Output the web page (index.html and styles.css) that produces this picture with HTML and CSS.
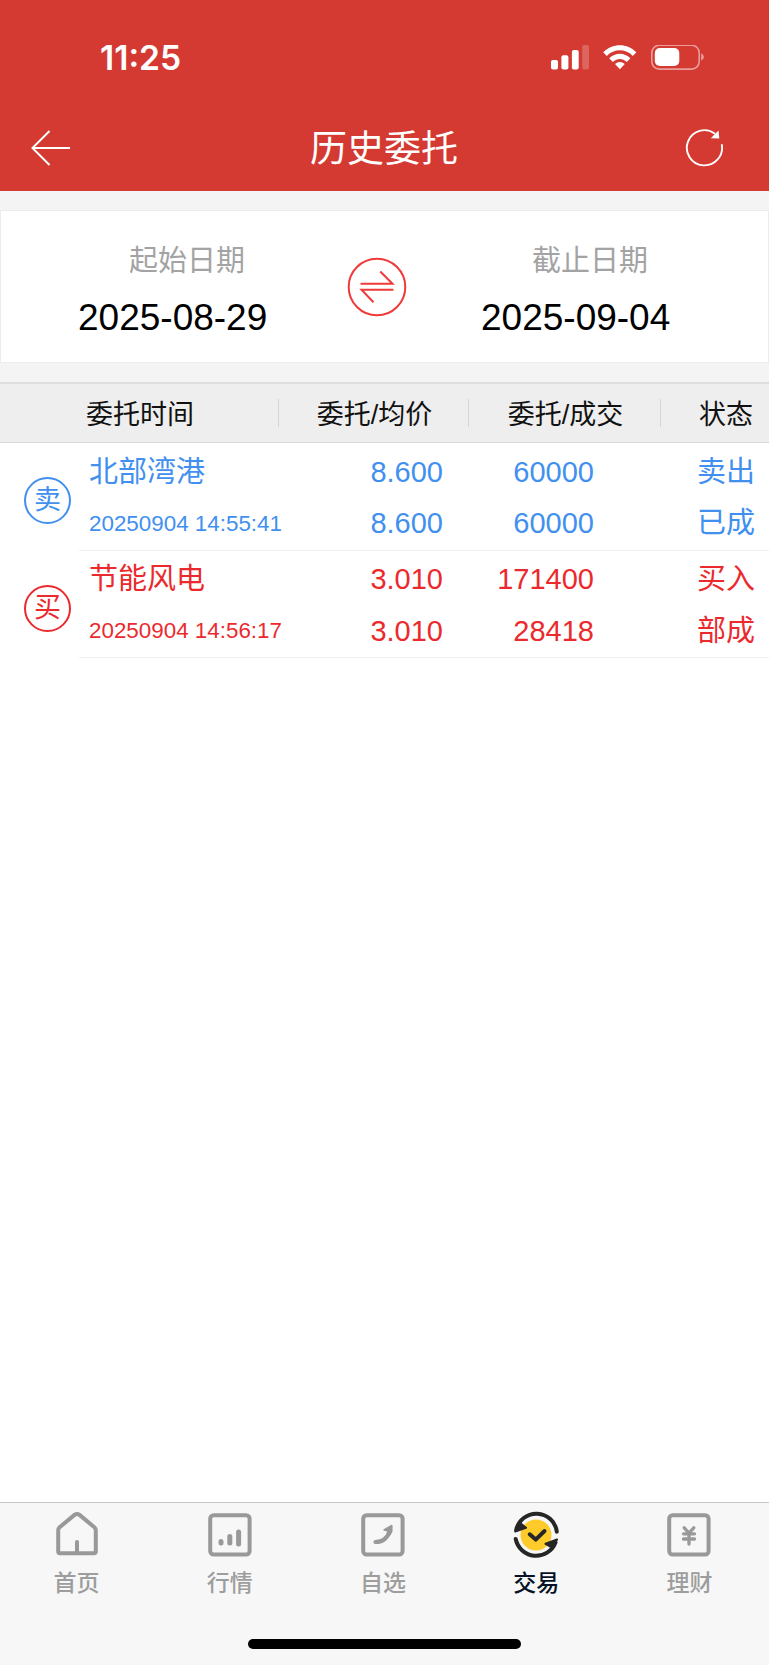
FILE: index.html
```html
<!DOCTYPE html>
<html lang="zh-CN">
<head>
<meta charset="utf-8">
<title>历史委托</title>
<link rel="stylesheet" href="styles.css">
</head>
<body>
<div class="app">
  <header class="top">
    <div class="status">
      <span class="clock">11:25</span>
      <svg class="status-icons" width="154" height="26" viewBox="0 0 154 26" fill="#fff">
        <rect x="0" y="15" width="7" height="9.5" rx="2"/>
        <rect x="10.4" y="10.3" width="7" height="14.2" rx="2"/>
        <rect x="20.9" y="5" width="6.8" height="19.5" rx="2"/>
        <rect x="31.2" y="0" width="6.8" height="24.5" rx="2" opacity=".22"/>
        <path d="M52.2 7.2C61.5-2.2 76.3-2.2 85.400 7.200L81.800 10.900C74.500 3.500 63.200 3.500 55.800 10.900ZM58.200 13.300C64.300 7.200 73.400 7.200 79.400 13.300L75.800 17C71.600 12.900 66 12.900 61.900 17ZM64 19C66.900 16.300 70.900 16.300 73.800 19L68.900 24.200Z"/>
        <rect x="100.800" y=".3" width="47.400" height="23.800" rx="7.500" fill="none" stroke="#fff" stroke-width="1.600" opacity=".5"/>
        <rect x="103.800" y="3" width="24.500" height="18" rx="5"/>
        <path d="M150.200 8.500C153.700 9.800 153.700 14 150.200 15.400Z" opacity=".5"/>
      </svg>
    </div>
    <div class="nav">
      <svg width="40" height="38" viewBox="0 0 40 38" fill="none" stroke="#fff" stroke-width="2"><path d="M18.500 2L1.500 19L18.500 36M1.500 19H39"/></svg>
      <h1 class="title">历史委托</h1>
      <svg width="40" height="40" viewBox="0 0 40 40" fill="none" stroke="#fff" stroke-width="1.900"><path d="M37.700 16.300A17.600 17.600 0 1 1 31 5.700"/><path d="M34.500 2.500L35.300 10.500L26.800 10.200Z" fill="#fff" stroke="none"/></svg>
    </div>
  </header>
  <section class="range">
    <div class="date">
      <span class="date-label">起始日期</span>
      <span class="date-value">2025-08-29</span>
    </div>
    <svg class="swap" width="60" height="60" viewBox="0 0 60 60" fill="none" stroke="#f03a3a" stroke-width="2"><circle cx="30" cy="30" r="28.300"/><path d="M13.500 26.700H45.500L33.300 14.500M46.500 32.700H14.500L26.500 45.300"/></svg>
    <div class="date">
      <span class="date-label">截止日期</span>
      <span class="date-value">2025-09-04</span>
    </div>
  </section>
  <div class="thead">
    <span class="th">委托时间</span><span class="th">委托/均价</span><span class="th">委托/成交</span><span class="th">状态</span>
  </div>
  <main class="orders">
    <article class="order sell">
      <span class="badge">卖</span>
      <div class="cells">
        <span class="name">北部湾港</span><span class="num">8.600</span><span class="num">60000</span><span class="state">卖出</span>
        <span class="time">20250904 14:55:41</span><span class="num">8.600</span><span class="num">60000</span><span class="state">已成</span>
      </div>
    </article>
    <article class="order buy">
      <span class="badge">买</span>
      <div class="cells">
        <span class="name">节能风电</span><span class="num">3.010</span><span class="num">171400</span><span class="state">买入</span>
        <span class="time">20250904 14:56:17</span><span class="num">3.010</span><span class="num">28418</span><span class="state">部成</span>
      </div>
    </article>
  </main>
  <footer class="bottom">
    <nav class="tabs">
      <a class="tab"><svg class="tab-icon" viewBox="0 0 48 48"><path d="M5.200 40.500V19.500Q5.200 17.500 6.600 16.300L21.500 3.900Q24 2 26.500 3.900L41.400 16.300Q42.800 17.500 42.800 19.500V40.500Q42.800 42.200 41 42.200H7Q5.200 42.200 5.200 40.500ZM24 41V31" /></svg><span>首页</span></a>
      <a class="tab"><svg class="tab-icon" viewBox="0 0 48 48"><rect x="4.200" y="4.200" width="39.400" height="39.400" rx="3.500"/><path d="M15 30.500V32M23.800 25.500V32M32.600 21V33" stroke-width="5"/></svg><span>行情</span></a>
      <a class="tab"><svg class="tab-icon" viewBox="0 0 48 48"><rect x="4.200" y="4.200" width="39.400" height="39.400" rx="3.500"/><path d="M16.400 31Q27 31 30.500 20.500"/><path d="M25 19L32.800 14.500V20.500L30.500 24.500L28.500 19.800Z" fill="#999" stroke-width="1.500"/></svg><span>自选</span></a>
      <a class="tab active"><svg class="tab-icon" viewBox="0 0 48 48"><circle cx="24" cy="24" r="15.500" fill="#ffcb2b" stroke="none"/><path d="M4.200 19A20.600 20.600 0 0 1 44.800 20.700M3.700 28A20.800 20.800 0 0 0 43.500 31.500"/><path d="M7 11L14 16.800L3.200 20.500ZM45 28.500L33.500 32.800L40.500 37Z" fill="#262626" stroke-width="2"/><path d="M17.700 23.300L23.700 28.600L32.500 20"/></svg><span>交易</span></a>
      <a class="tab"><svg class="tab-icon" viewBox="0 0 48 48"><rect x="4.200" y="4.200" width="39.400" height="39.400" rx="3.500"/><path d="M19.200 16.800L24 22L28.800 16.800M18.500 22.800H29.500M18.500 28H29.500M24 23V33" stroke-width="3.300"/></svg><span>理财</span></a>
    </nav>
    <div class="home-bar"></div>
  </footer>
</div>
</body>
</html>
```
FILE: styles.css
```css
* { box-sizing: border-box; }
body { margin: 0; font-family: "Liberation Sans", "Noto Sans CJK SC", sans-serif; background: #fff; }
.app { width: 769px; height: 1665px; display: flex; flex-direction: column; background: #f4f4f4; overflow: hidden; }
.top { height: 191px; background: #d43a32; color: #fff; flex: none; }
.status { height: 105px; padding: 45px 64px 0 100px; display: flex; justify-content: space-between; }
.clock { font: 600 33.6px/25px Inter, sans-serif; }
.nav { height: 86px; padding: 0 45px 0 31px; display: flex; align-items: center; justify-content: space-between; }
.title { margin: 0; padding: 4px 0 0 13px; font-size: 37px; font-weight: 400; line-height: 50px; }
.range { flex: none; height: 153px; margin-top: 19px; border: 1px solid #ececec; background: #fff; display: grid; grid-template-columns: 346px 60px 1fr; }
.date { padding: 32px 0 0 77px; display: flex; flex-direction: column; }
.date + .swap { margin-top: 46px; }
.swap + .date { padding-left: 74px; }
.date-label { padding-left: 51px; font-size: 29px; line-height: 36px; color: #a3a3a3; }
.date-value { margin-top: 18px; font-size: 37px; line-height: 42px; color: #000; }
.thead { flex: none; height: 61px; margin-top: 19px; border-top: 2px solid #dedede; border-bottom: 1px solid #d8d8d8; background: #eee; display: grid; grid-template-columns: 279px 190px 192px 1fr; align-items: center; font-size: 27px; line-height: 32px; color: #111; }
.th { height: 28px; border-right: 1px solid #d6d6d6; text-align: center; padding-left: 2px; }
.th:last-child { border: 0; padding-left: 22px; }
.orders { flex: 1; background: #fff; }
.order { height: 107.5px; display: flex; padding-left: 24px; }
.sell { color: #4190ef; }
.buy { color: #eb2a2e; }
.badge { width: 47px; height: 47px; margin-top: 34px; border: 2px solid; border-radius: 50%; font-size: 27px; line-height: 43px; text-align: center; }
.cells { margin-left: 8px; padding: 3px 0 0 10px; width: 690px; border-bottom: 1px solid #f0f0f0; display: grid; grid-template-columns: 230px 124px 151px 1fr; grid-template-rows: 51px 52px; align-items: center; font-size: 29px; line-height: 40px; }
.num { text-align: right; }
.state { padding-left: 103px; }
.time { padding-top: 1px; font-size: 22.4px; }
.bottom { flex: none; height: 163px; border-top: 1px solid #c6c6c6; background: #f7f7f7; display: flex; flex-direction: column; align-items: center; }
.tabs { width: 766px; margin-right: 3px; height: 136px; display: grid; grid-template-columns: repeat(5, 1fr); }
.tab { padding-top: 8px; display: flex; flex-direction: column; align-items: center; font-size: 23px; font-weight: 500; line-height: 30px; color: #9d9d9d; }
.tab span { margin-top: 9px; }
.tab-icon { width: 48px; height: 48px; fill: none; stroke: #999; stroke-width: 4; stroke-linecap: round; stroke-linejoin: round; }
.active { color: #071226; }
.active .tab-icon { stroke: #262626; }
.home-bar { width: 273px; height: 10px; border-radius: 5px; background: #000; }
```
